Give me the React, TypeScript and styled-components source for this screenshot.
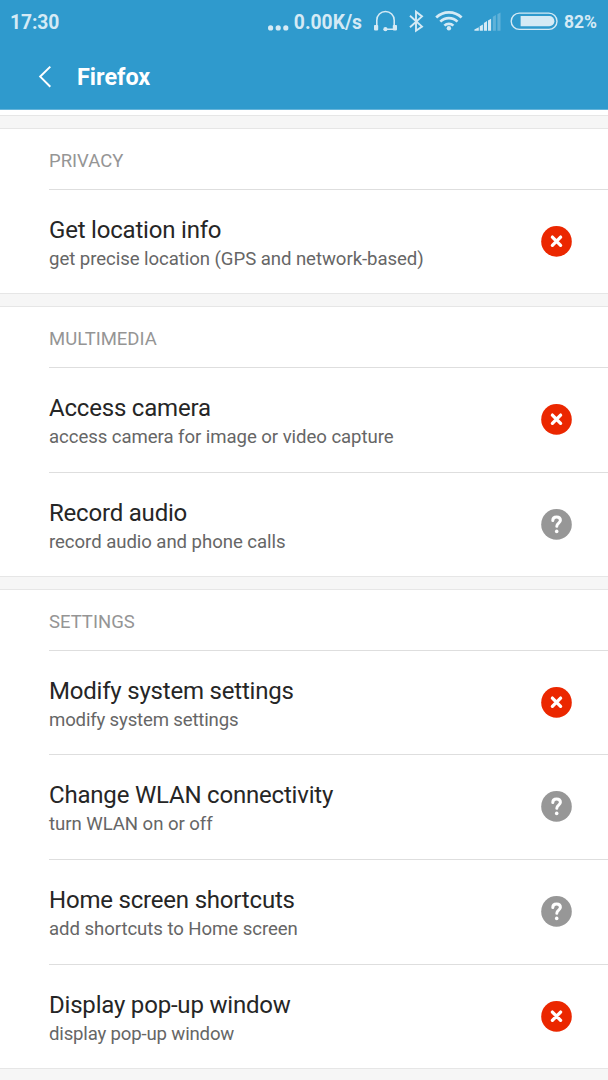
import React from 'react';
import styled, { createGlobalStyle } from 'styled-components';

const GlobalStyle = createGlobalStyle`
  * { box-sizing: border-box; }
  body {
    margin: 0;
    background: #fff;
    font-family: Roboto, 'Liberation Sans', sans-serif;
  }
`;

const Screen = styled.div`
  width: 608px;
  height: 1080px;
  overflow: hidden;
  display: flex;
  flex-direction: column;
  background: #fff;
`;

const Header = styled.header`
  flex: none;
  height: 110px;
  background: #2f9acd;
  border-bottom: 1px solid #65b4da;
`;

const StatusBar = styled.div`
  height: 44px;
  display: flex;
  align-items: center;
  padding: 0 11px 0 10px;
  color: #d5eaf5;
  font-weight: 700;
  line-height: 44px;
`;

const Clock = styled.span`
  padding-top: 1px;
  font-size: 19.3px;
  letter-spacing: -0.1px;
  flex: 1;
`;

const Speed = styled.span`
  padding-top: 1px;
  font-size: 19.3px;
  margin-left: 5px;
`;

const Percent = styled.span`
  font-size: 17.5px;
  margin-left: 6px;
`;

const Glyph = styled.svg<{ $gap?: number }>`
  flex: none;
  display: block;
  margin-left: ${({ $gap = 0 }) => $gap}px;
`;

const TitleBar = styled.div`
  height: 65px;
  display: flex;
  align-items: center;
  padding-left: 37px;
`;

const Title = styled.h1`
  margin: 0 0 0 22px;
  font-size: 23.4px;
  line-height: 28px;
  font-weight: 700;
  color: #fff;
`;

const Spacer = styled.div`
  flex: none;
  height: 14px;
  background: #f6f6f6;
  border-top: 1px solid #e6e6e6;
  border-bottom: 1px solid #e6e6e6;
`;

const List = styled.main`
  padding-top: 5px;
`;

const Section = styled.section`
  padding-left: 49px;
`;

const SectionLabel = styled.h2`
  margin: 0;
  height: 61px;
  padding-top: 2px;
  border-bottom: 1px solid #dedede;
  font-size: 18.5px;
  line-height: 60px;
  font-weight: 400;
  color: #959595;
`;

const Row = styled.div<{ $height: number }>`
  height: ${({ $height }) => $height}px;
  display: flex;
  align-items: flex-start;
  justify-content: space-between;
  padding-right: 36px;
  border-bottom: 1px solid #dedede;
  &:last-child { border-bottom: 0; }
`;

const RowText = styled.div`
  padding-top: 26px;
`;

const RowTitle = styled.div`
  font-size: 24px;
  line-height: 28px;
  letter-spacing: -0.2px;
  color: #262626;
  white-space: nowrap;
`;

const RowDetail = styled.div<{ $tracking?: number }>`
  margin-top: 3px;
  font-size: 18.6px;
  line-height: 24px;
  letter-spacing: ${({ $tracking = -0.06 }) => $tracking}px;
  color: #666;
  white-space: nowrap;
`;

const StateIcon = styled.svg`
  flex: none;
  display: block;
  margin-top: 36px;
`;

type State = 'deny' | 'ask';

const StateMark = ({ state }: { state: State }) => (
  <StateIcon width="31" height="31" viewBox="0 0 31 31" fill="none">
    <circle cx="15.5" cy="15.4" r="15.3" fill={state === 'deny' ? '#eb2700' : '#979797'} />
    {state === 'deny' ? (
      <path d="M11.4 11.1l8.2 8.2M19.6 11.1l-8.2 8.2" stroke="#fff" strokeWidth="3.3" strokeLinecap="round" />
    ) : (
      <>
        <path d="M11.8 11.5c0-2.2 1.6-3.5 3.8-3.5s3.8 1.3 3.8 3.3c0 2.8-3.6 2.9-3.6 6" stroke="#fff" strokeWidth="3" strokeLinecap="round" />
        <circle cx="15.7" cy="22.4" r="1.8" fill="#fff" />
      </>
    )}
  </StateIcon>
);

const ink = '#d5eaf5';

interface Permission { title: string; detail: string; state: State; height: number; tracking?: number }

const sections: { label: string; items: Permission[] }[] = [
  {
    label: 'PRIVACY',
    items: [
      { title: 'Get location info', detail: 'get precise location (GPS and network-based)', state: 'deny', height: 103 },
    ],
  },
  {
    label: 'MULTIMEDIA',
    items: [
      { title: 'Access camera', detail: 'access camera for image or video capture', state: 'deny', height: 105 },
      { title: 'Record audio', detail: 'record audio and phone calls', state: 'ask', height: 103 },
    ],
  },
  {
    label: 'SETTINGS',
    items: [
      { title: 'Modify system settings', detail: 'modify system settings', state: 'deny', height: 104, tracking: -0.17 },
      { title: 'Change WLAN connectivity', detail: 'turn WLAN on or off', state: 'ask', height: 105 },
      { title: 'Home screen shortcuts', detail: 'add shortcuts to Home screen', state: 'ask', height: 105 },
      { title: 'Display pop-up window', detail: 'display pop-up window', state: 'deny', height: 103, tracking: -0.17 },
    ],
  },
];

export default function App() {
  return (
    <Screen>
      <GlobalStyle />
      <Header>
        <StatusBar>
          <Clock>17:30</Clock>
          <Glyph width="21" height="44" viewBox="0 0 21 44" fill={ink}>
            <circle cx="2.6" cy="27.9" r="2.6" />
            <circle cx="10.2" cy="27.9" r="2.6" />
            <circle cx="17.8" cy="27.9" r="2.6" />
          </Glyph>
          <Speed>0.00K/s</Speed>
          <Glyph $gap={12} width="25" height="44" viewBox="0 0 25 44" fill="none">
            <path d="M2.8 27V20.2a8.7 8.7 0 0 1 17.4 0V29.2h-8" stroke={ink} strokeWidth="1.6" />
            <rect x="0" y="25" width="4.2" height="5.4" rx=".8" fill={ink} />
            <rect x="18.8" y="25" width="4.2" height="5.4" rx=".8" fill={ink} />
            <circle cx="11.4" cy="29.2" r="2.1" fill={ink} />
          </Glyph>
          <Glyph $gap={10} width="16" height="44" viewBox="0 0 16 44" fill="none">
            <path d="M1 15.8l12 10.8-6 4.2V11.8l6 4.6-12 10.8" stroke={ink} strokeWidth="1.9" />
          </Glyph>
          <Glyph $gap={10} width="28" height="44" viewBox="0 0 28 44" fill="none">
            <path d="M1.2 17.5a18.2 18.2 0 0 1 25.4 0M5.3 21.6a12.3 12.3 0 0 1 17.2 0M9.4 25.6a6.5 6.5 0 0 1 9 0" stroke={ink} strokeWidth="2.7" />
            <circle cx="13.9" cy="28.3" r="2.2" fill={ink} />
          </Glyph>
          <Glyph $gap={11} width="28" height="44" viewBox="0 0 28 44" fill={ink}>
            <path d="M.4 30.7V29.4l4.4-2.2v3.5zM5.7 30.7v-4.4l3.2-1.8v6.2zM9.9 30.7v-7.8l3.1-1.8v9.6zM14 30.7V20.5l3.1-1.8v12z" />
            <path d="M18.8 30.7V16.8l3.1-1.8v15.7zM23.4 30.7V14.2l3.1-1.8v18.3z" opacity=".3" />
          </Glyph>
          <Glyph $gap={8} width="48" height="44" viewBox="0 0 48 44" fill="none">
            <rect x="1.2" y="13.1" width="45.8" height="16.3" rx="8.15" stroke={ink} strokeWidth="1.4" />
            <path d="M10.6 16.1h28.7a5 5 0 0 1 0 10.2H10.6z" fill={ink} />
          </Glyph>
          <Percent>82%</Percent>
        </StatusBar>
        <TitleBar>
          <Glyph width="18" height="26" viewBox="0 0 18 26" fill="none">
            <path d="M13.3 2.6L3.2 12.6l10.1 10.2" stroke="#fff" strokeWidth="2" />
          </Glyph>
          <Title>Firefox</Title>
        </TitleBar>
      </Header>
      <List>
        <Spacer />
        {sections.map(({ label, items }) => (
          <React.Fragment key={label}>
            <Section>
              <SectionLabel>{label}</SectionLabel>
              {items.map(({ title, detail, state, height, tracking }) => (
                <Row key={title} $height={height}>
                  <RowText>
                    <RowTitle>{title}</RowTitle>
                    <RowDetail $tracking={tracking}>{detail}</RowDetail>
                  </RowText>
                  <StateMark state={state} />
                </Row>
              ))}
            </Section>
            <Spacer />
          </React.Fragment>
        ))}
      </List>
    </Screen>
  );
}
